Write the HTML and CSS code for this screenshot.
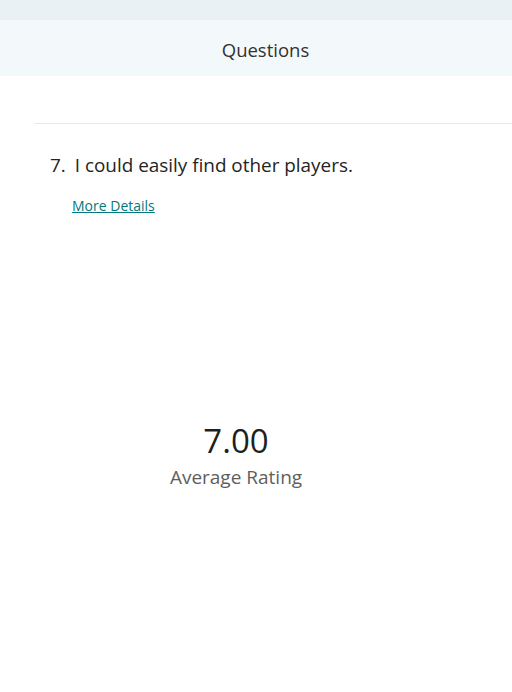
FILE: index.html
```html
<!DOCTYPE html>
<html>
<head>
<meta charset="utf-8">
<link rel="stylesheet" href="styles.css">
</head>
<body>
<div class="topband"></div>
<header class="header"><span class="title">Questions</span></header>
<main class="content">
  <div class="divider"></div>
  <div class="question">
    <span class="num">7.</span>
    <span class="qtext">I could easily find other players.</span>
  </div>
  <a class="more" href="#">More Details</a>
  <div class="stat">
    <div class="value">7.00</div>
    <div class="label">Average Rating</div>
  </div>
</main>
</body>
</html>
```
FILE: styles.css
```css
html, body {
  margin: 0;
  padding: 0;
  background: #ffffff;
  font-family: "Open Sans", "Noto Sans", sans-serif;
  color: #323130;
}
.topband {
  height: 20px;
  background: #e9f1f4;
}
.header {
  height: 56px;
  box-sizing: border-box;
  padding-top: 3px;
  background: #f3f9fa;
  display: flex;
  align-items: center;
  justify-content: center;
  padding-left: 19px;
}
.title {
  font-size: 18.5px;
  color: #323130;
}
.content {
  padding-top: 47px;
  padding-left: 34px;
}
.divider {
  height: 1px;
  background: #e8e8e8;
}
.question {
  display: flex;
  gap: 9px;
  padding-left: 16px;
  margin-top: 29px;
  font-size: 18.9px;
  line-height: 24px;
  color: #252423;
}
.more {
  display: inline-block;
  margin-top: 20px;
  margin-left: 38px;
  font-size: 14px;
  line-height: 18px;
  color: #03787c;
}
.stat {
  margin-top: 203px;
  width: 404px;
  display: flex;
  flex-direction: column;
  align-items: center;
}
.value {
  font-size: 33px;
  line-height: 44px;
  color: #201f1e;
}
.label {
  font-size: 19px;
  line-height: 26px;
  color: #605e5c;
  margin-top: 1px;
}
```
